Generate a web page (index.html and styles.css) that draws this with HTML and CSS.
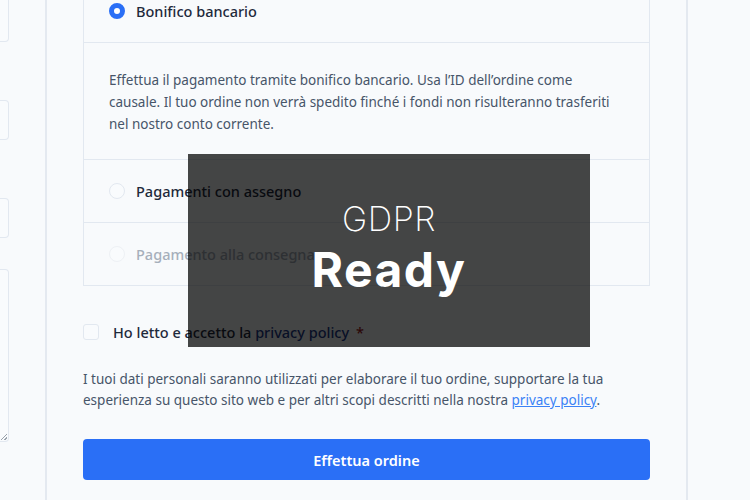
FILE: index.html
```html
<!DOCTYPE html>
<html lang="it">
<head>
<meta charset="utf-8">
<link rel="stylesheet" href="styles.css">
</head>
<body>
<div class="page">
  <div class="fields">
    <div class="field f1"></div>
    <div class="field f2"></div>
    <div class="field f3"></div>
    <div class="field area"><span class="grip"></span></div>
  </div>
  <div class="card">
    <div class="methods">
      <div class="method">
        <span class="radio checked"></span>
        <span class="label">Bonifico bancario</span>
      </div>
      <div class="desc">Effettua il pagamento tramite bonifico bancario. Usa l’ID dell’ordine come<br>causale. Il tuo ordine non verrà spedito finché i fondi non risulteranno trasferiti<br>nel nostro conto corrente.</div>
      <div class="method">
        <span class="radio"></span>
        <span class="label">Pagamenti con assegno</span>
      </div>
      <div class="method disabled">
        <span class="radio"></span>
        <span class="label">Pagamento alla consegna</span>
      </div>
    </div>
    <div class="terms">
      <span class="check"></span>
      <span class="terms-text">Ho letto e accetto la <a class="terms-link">privacy policy</a> <span class="req">*</span></span>
    </div>
    <p class="notice">I tuoi dati personali saranno utilizzati per elaborare il tuo ordine, supportare la tua<br>esperienza su questo sito web e per altri scopi descritti nella nostra <a class="notice-link">privacy policy</a>.</p>
    <button class="order">Effettua ordine</button>
  </div>
</div>
<div class="badge">
  <div class="badge-top">GDPR</div>
  <div class="badge-bottom">Ready</div>
</div>
</body>
</html>
```
FILE: styles.css
```css
html, body {
  margin: 0;
  padding: 0;
  background: #f8fafc;
  width: 750px;
  height: 500px;
  overflow: hidden;
}
body {
  font-family: "Noto Sans", "Open Sans", sans-serif;
  position: relative;
}
.page {
  display: flex;
  align-items: flex-start;
}
.fields {
  width: 9px;
  display: flex;
  flex-direction: column;
  flex-shrink: 0;
}
.field {
  box-sizing: border-box;
  border: 1px solid #e2e8f0;
  border-left: none;
  border-radius: 0 4px 4px 0;
  background: #f9fbfd;
  height: 40px;
}
.f1 { margin-top: -6px; height: 48px; }
.f2 { margin-top: 58px; }
.f3 { margin-top: 58px; }
.area {
  margin-top: 31px;
  height: 173px;
  position: relative;
}
.grip {
  position: absolute;
  right: 1px;
  bottom: 1px;
  width: 6px;
  height: 6px;
  background: linear-gradient(135deg, transparent 45%, #9aa3ad 45%, #9aa3ad 55%, transparent 55%, transparent 75%, #9aa3ad 75%, #9aa3ad 85%, transparent 85%);
}
.card {
  margin-left: 36px;
  width: 567px;
  padding: 0 36px;
  border-left: 2px solid #e4e9f0;
  border-right: 2px solid #e4e9f0;
  height: 520px;
  margin-top: -20px;
}
.methods {
  border: 1px solid #e2e8f0;
  border-top: none;
}
.method {
  display: flex;
  align-items: center;
  height: 62px;
  padding-left: 25px;
  border-top: 1px solid #e2e8f0;
  gap: 11px;
}
.methods .method:first-child {
  border-top: none;
}
.radio {
  width: 16px;
  height: 16px;
  box-sizing: border-box;
  border-radius: 50%;
  border: 1px solid #e2e8f0;
  background: #f9fbfd;
  flex-shrink: 0;
}
.radio.checked {
  border: 5px solid #2a6ff6;
  background: #ffffff;
}
.label {
  font-size: 14.5px;
  font-weight: 500;
  color: #1e293b;
}
.disabled .label { color: #a6afbb; }
.disabled .radio { border-color: #eef1f5; }
.desc {
  border-top: 1px solid #e2e8f0;
  padding: 26px 25px 24px;
  font-size: 13.5px;
  line-height: 22px;
  color: #475569;
  white-space: nowrap;
}
.terms {
  display: flex;
  align-items: center;
  gap: 14px;
  margin-top: 35px;
  height: 22px;
}
.check {
  width: 16px;
  height: 16px;
  box-sizing: border-box;
  border: 1px solid #e2e8f0;
  border-radius: 3px;
  background: #f9fbfd;
}
.terms-text {
  font-size: 14.5px;
  font-weight: 500;
  color: #1e293b;
}
.terms-link { color: #1e3a8a; }
.req { color: #9b1c1c; margin-left: 3px; }
.notice {
  margin: 26px 0 0;
  font-size: 13.5px;
  line-height: 21px;
  color: #475569;
  white-space: nowrap;
}
.notice-link {
  color: #3b82f6;
  text-decoration: underline;
}
.order {
  display: block;
  margin-top: 28px;
  width: 100%;
  height: 41px;
  border: none;
  border-radius: 4px;
  background: #2a6ff6;
  color: #ffffff;
  font-family: "Noto Sans", "Open Sans", sans-serif;
  font-size: 14.5px;
  font-weight: 600;
}
.badge {
  position: absolute;
  left: 188px;
  top: 154px;
  width: 402px;
  height: 193px;
  background: rgba(0, 0, 0, 0.725);
  display: flex;
  flex-direction: column;
  align-items: center;
  justify-content: center;
  color: #ffffff;
  font-family: "Inter", sans-serif;
}
.badge-top {
  font-size: 34px;
  font-weight: 200;
  line-height: 40px;
  margin-top: -4px;
  letter-spacing: 0.5px;
}
.badge-bottom {
  font-size: 48px;
  font-weight: 700;
  line-height: 58px;
  letter-spacing: 1.5px;
  margin-top: 2px;
}
```
